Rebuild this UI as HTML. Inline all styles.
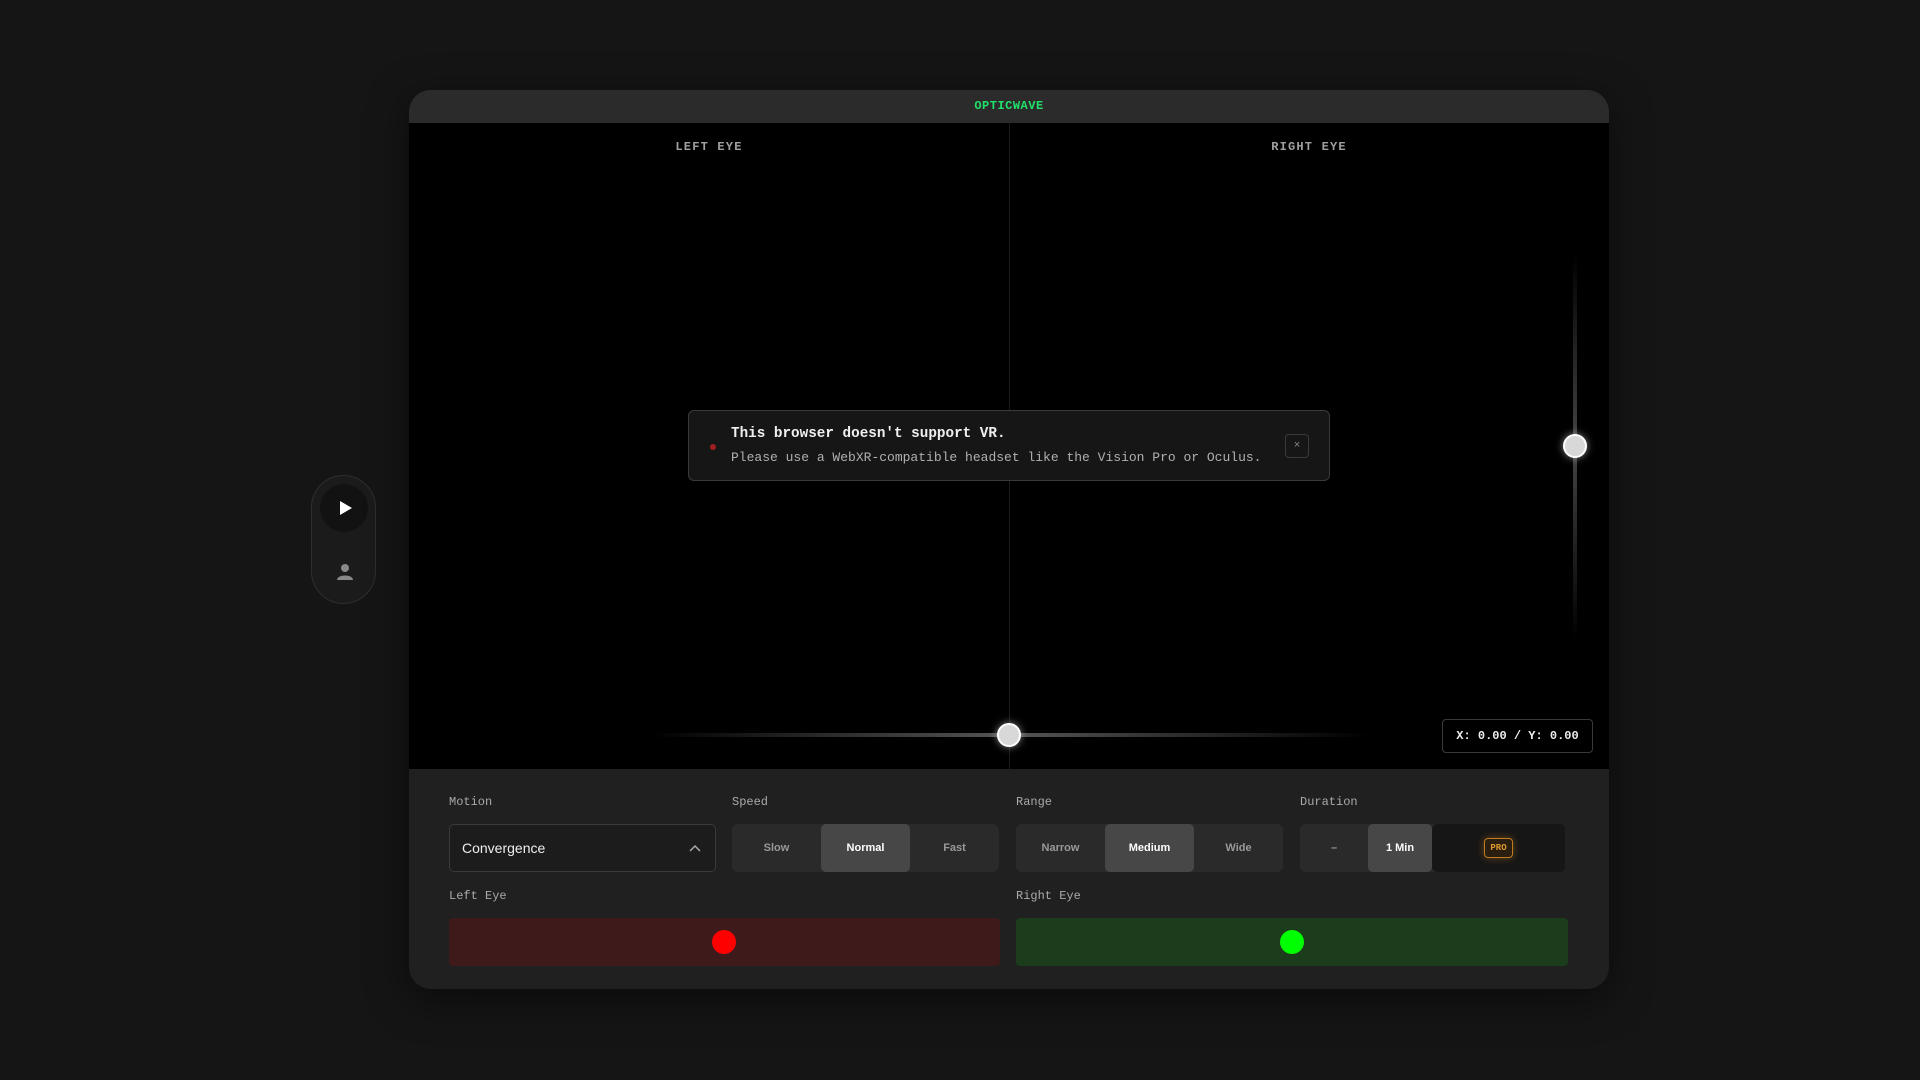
<!DOCTYPE html>
<html><head><style>
*{box-sizing:border-box;margin:0;padding:0}
body{width:1920px;height:1080px;background:#151515;position:relative;overflow:hidden;font-family:"Liberation Mono",monospace}
.panel{position:absolute;left:409px;top:90px;width:1200px;height:899px;background:#202020;border-radius:22px;overflow:hidden;box-shadow:0 10px 40px rgba(0,0,0,.5)}
.hdr{height:33px;background:#2b2b2b;color:#22e06a;font-weight:bold;font-size:12px;text-align:center;line-height:33px;letter-spacing:.5px}
.vp{position:absolute;top:33px;left:0;width:1200px;height:646px;background:#000}
.div{position:absolute;left:600px;top:0;width:1px;height:646px;background:#1c1c1c}
.eye{position:absolute;top:17px;color:#a0a0a0;font-size:12px;font-weight:bold;letter-spacing:1.2px;transform:translateX(-50%)}
.toast{position:absolute;left:279px;top:287px;width:642px;height:71px;background:#161616;border:1px solid #3a3a3a;border-radius:6px}
.toast .dot{position:absolute;left:21px;top:33px;width:6px;height:6px;border-radius:50%;background:#a02020}
.toast .t1{position:absolute;left:42px;top:15px;color:#f0f0f0;font-weight:bold;font-size:14.3px}
.toast .t2{position:absolute;left:42px;top:39px;color:#b0b0b0;font-size:13px}
.toast .x{position:absolute;right:20px;top:23px;width:24px;height:24px;border:1px solid #3a3a3a;border-radius:4px;color:#888;font-size:11px;text-align:center;line-height:22px}
.thumb{position:absolute;width:24px;height:24px;border-radius:50%;background:#d8d8d8;border:2px solid #fff;box-shadow:0 0 8px rgba(255,255,255,.5);transform:translate(-50%,-50%)}
.coord{position:absolute;left:1033px;top:596px;width:151px;height:34px;border:1px solid #3a3a3a;border-radius:4px;background:#000;color:#eee;font-weight:bold;font-size:12px;text-align:center;line-height:32px}
.lbl{position:absolute;color:#aaa;font-size:12px}
.seg{position:absolute;top:734px;width:267px;height:48px;background:#2a2a2a;border-radius:6px;display:flex;font-family:"Liberation Sans",sans-serif;font-size:11px;font-weight:bold;color:#999}
.seg div{flex:1;display:flex;align-items:center;justify-content:center;border-radius:5px}
.seg .on{background:#474747;color:#fff}
.sel{position:absolute;left:40px;top:734px;width:267px;height:48px;background:#1c1c1c;border:1px solid #3a3a3a;border-radius:5px;color:#eee;font-family:"Liberation Sans",sans-serif;font-size:14px;padding-left:12px;line-height:46px}
.bar{position:absolute;top:828px;width:552px;height:48px;border-radius:4px}
.cd{position:absolute;top:12px;width:24px;height:24px;border-radius:50%}
</style></head><body>
<div style="position:absolute;left:311px;top:475px;width:65px;height:129px;border:1px solid #2e2e2e;border-radius:33px;background:#1b1b1b">
 <div style="position:absolute;left:8px;top:8px;width:48px;height:48px;border-radius:50%;background:#121212"></div>
 <svg style="position:absolute;left:27px;top:24px" width="14" height="16"><path d="M1 1L13 8L1 15Z" fill="#fff"/></svg>
 <svg style="position:absolute;left:24px;top:87px" width="18" height="18"><circle cx="9" cy="5" r="4" fill="#888"/><path d="M1 17C1 11 17 11 17 17Z" fill="#888"/></svg>
</div>
<div class="panel">
 <div class="hdr">OPTICWAVE</div>
 <div class="vp">
  <div class="div"></div>
  <div class="eye" style="left:300px">LEFT EYE</div>
  <div class="eye" style="left:900px">RIGHT EYE</div>
  <div style="position:absolute;left:1164px;top:130px;width:4px;height:387px;background:linear-gradient(#000,#444 50%,#000);border-radius:2px"></div>
  <div class="thumb" style="left:1166px;top:323px"></div>
  <div style="position:absolute;left:240px;top:610px;width:719px;height:4px;background:linear-gradient(90deg,#000,#555 50%,#000)"></div>
  <div class="thumb" style="left:600px;top:612px"></div>
  <div class="toast"><div class="dot"></div><div class="t1">This browser doesn't support VR.</div><div class="t2">Please use a WebXR-compatible headset like the Vision Pro or Oculus.</div><div class="x">×</div></div>
  <div class="coord">X: 0.00 / Y: 0.00</div>
 </div>
 <div class="lbl" style="left:40px;top:705px">Motion</div>
 <div class="lbl" style="left:323px;top:705px">Speed</div>
 <div class="lbl" style="left:607px;top:705px">Range</div>
 <div class="lbl" style="left:891px;top:705px">Duration</div>
 <div class="sel">Convergence<svg style="position:absolute;right:14px;top:19px" width="12" height="8"><path d="M1 7L6 2L11 7" stroke="#aaa" stroke-width="1.5" fill="none"/></svg></div>
 <div class="seg" style="left:323px"><div>Slow</div><div class="on">Normal</div><div>Fast</div></div>
 <div class="seg" style="left:607px"><div>Narrow</div><div class="on">Medium</div><div>Wide</div></div>
 <div class="seg" style="left:891px;width:265px"><div style="flex:0 0 68px">–</div><div class="on" style="flex:0 0 64px">1 Min</div><div style="background:#161616;position:relative"><span style="border:1px solid #c07a20;color:#e09a30;border-radius:4px;padding:4px 5px;font-family:'Liberation Mono',monospace;font-size:9px;box-shadow:0 0 8px rgba(224,140,40,.4);background:#2a1e10">PRO</span></div></div>
 <div class="lbl" style="left:40px;top:799px">Left Eye</div>
 <div class="lbl" style="left:607px;top:799px">Right Eye</div>
 <div class="bar" style="left:40px;width:551px;background:#3e1a1a"><div class="cd" style="background:#ff0000;left:263px"></div></div>
 <div class="bar" style="left:607px;background:#1b3d1b"><div class="cd" style="background:#00ff00;left:264px"></div></div>
</div>
</body></html>
